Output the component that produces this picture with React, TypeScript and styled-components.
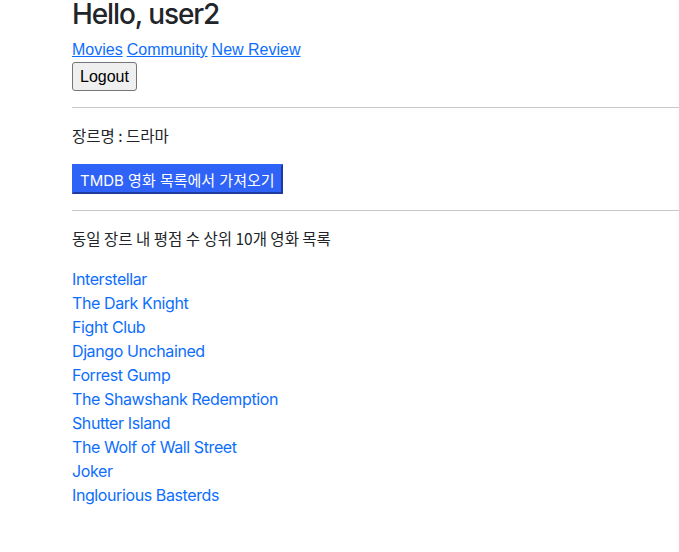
import React from "react";
import styled, { createGlobalStyle } from "styled-components";

const GlobalStyle = createGlobalStyle`
  html, body { margin: 0; padding: 0; background: #fff; }
  body {
    font-family: "Liberation Sans", "Noto Sans CJK KR", sans-serif;
    font-size: 16px;
    line-height: 1.5;
    color: #212529;
  }
`;

const Page = styled.div`
  padding: 0 0 0 72px;
  overflow: hidden;
`;

const Title = styled.h1`
  margin: 0 0 9px;
  font-family: Inter, sans-serif;
  font-size: 28px;
  font-weight: 500;
  letter-spacing: -1.1px;
  line-height: 29px;
  color: #212529;
`;

const Nav = styled.nav`
  display: flex;
  gap: 4px;
  line-height: 24px;
`;

const NavLink = styled.a`
  color: #0d6efd;
  text-decoration: underline;
  font-family: "Liberation Sans", sans-serif;
`;

const LogoutButton = styled.button`
  font-family: "Liberation Sans", sans-serif;
  font-size: 16px;
  height: 29px;
  padding: 0 7px;
  background: #efefef;
  border: 1px solid #767676;
  border-radius: 3px;
  color: #000;
`;

const Rule = styled.hr`
  margin: 16px -20px 16px 0;
  border: 0;
  border-top: 1px solid #c8c8c8;
`;

const Text = styled.p`
  margin: 0 0 18px;
  font-family: "Noto Sans CJK KR", sans-serif;
  font-size: 15.5px;
  line-height: 22px;
  color: #212529;
`;

const ImportButton = styled.button`
  font-family: Inter, "Noto Sans CJK KR", sans-serif;
  font-size: 15px;
  height: 30px;
  padding: 0 6px;
  background: #2f62f7;
  color: #fff;
  border: 2px solid #2f62f7;
  border-right-color: #1d3a9c;
  border-bottom-color: #1d3a9c;
`;

const MovieList = styled.ul`
  list-style: none;
  margin: 0;
  padding: 0;
  font-family: Inter, sans-serif;
`;

const MovieItem = styled.li`
  height: 24px;
  line-height: 24px;
`;

const MovieLink = styled.a`
  display: inline-block;
  color: #0d6efd;
  text-decoration: none;
  letter-spacing: -0.4px;
  line-height: 24px;
`;

const movies = [
  "Interstellar",
  "The Dark Knight",
  "Fight Club",
  "Django Unchained",
  "Forrest Gump",
  "The Shawshank Redemption",
  "Shutter Island",
  "The Wolf of Wall Street",
  "Joker",
  "Inglourious Basterds",
];

export default function App() {
  return (
    <>
      <GlobalStyle />
      <Page>
        <Title>Hello, user2</Title>
        <Nav>
          <NavLink href="#">Movies</NavLink>
          <NavLink href="#">Community</NavLink>
          <NavLink href="#">New Review</NavLink>
        </Nav>
        <LogoutButton>Logout</LogoutButton>
        <Rule />
        <Text>장르명 : 드라마</Text>
        <ImportButton>TMDB 영화 목록에서 가져오기</ImportButton>
        <Rule />
        <Text>동일 장르 내 평점 수 상위 10개 영화 목록</Text>
        <MovieList>
          {movies.map((m) => (
            <MovieItem key={m}>
              <MovieLink href="#">{m}</MovieLink>
            </MovieItem>
          ))}
        </MovieList>
      </Page>
    </>
  );
}
